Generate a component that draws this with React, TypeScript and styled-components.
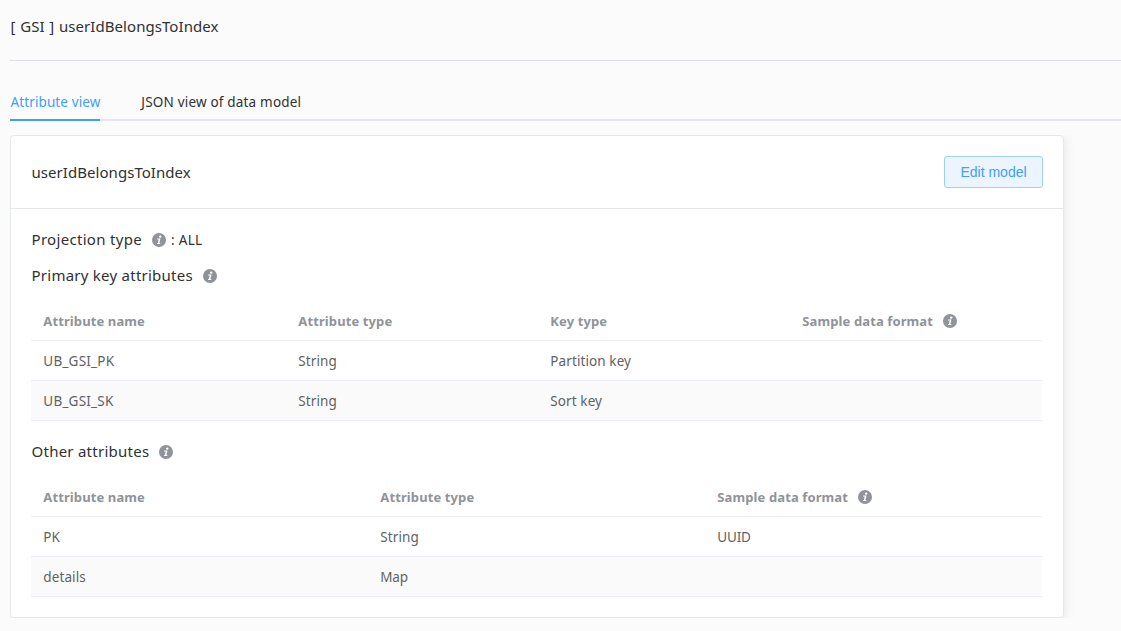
import React from "react";
import styled, { createGlobalStyle } from "styled-components";

const GlobalStyle = createGlobalStyle`
  * { box-sizing: border-box; }
  body {
    margin: 0;
    background: #fbfbfb;
    color: #303133;
    font-family: "Noto Sans", "Open Sans", sans-serif;
    overflow: hidden;
  }
`;

const Page = styled.main`
  height: 631px;
  padding-left: 10px;
  overflow: hidden;
`;

const PageTitle = styled.h1`
  height: 61px;
  margin: 0;
  padding: 15px 0 0 0.6px;
  border-bottom: 1px solid #dcdfe6;
  font-size: 15px;
  font-weight: 400;
  line-height: 23px;
  letter-spacing: 0.06px;
  word-spacing: 0.7px;
`;

const Tabs = styled.nav`
  display: flex;
  gap: 40px;
  height: 60px;
  box-shadow: inset 0 -2px #e4e7ed;
`;

const Tab = styled.a<{ $active?: boolean }>`
  height: 60px;
  width: ${(p) => (p.$active ? "90px" : "auto")};
  padding: 30px 0 0 ${(p) => (p.$active ? "0.5px" : "1.3px")};
  font-size: 13.5px;
  line-height: 22px;
  letter-spacing: ${(p) => (p.$active ? "0.11px" : "0.19px")};
  white-space: nowrap;
  color: ${(p) => (p.$active ? "#409eff" : "#303133")};
  border-bottom: 2px solid ${(p) => (p.$active ? "#409eff" : "transparent")};
`;

const TabPane = styled.section`
  margin-top: 14px;
  padding-right: 57px;
  overflow: hidden;
`;

const Card = styled.article`
  height: 483px;
  border: 1px solid #e4e7ed;
  border-radius: 4px;
  background: #fff;
  box-shadow: 0 2px 12px rgba(0, 0, 0, 0.1);
`;

const CardHeader = styled.header`
  display: flex;
  align-items: center;
  justify-content: space-between;
  height: 73px;
  padding: 0 20px;
  border-bottom: 1px solid #e4e7ed;
`;

const CardTitle = styled.h2`
  margin: 0;
  padding-left: 0.5px;
  font-size: 15px;
  font-weight: 400;
  letter-spacing: 0.05px;
`;

const EditButton = styled.button`
  width: 99px;
  height: 32px;
  padding: 0;
  border: 1px solid #a0cfff;
  border-radius: 3px;
  background: #ecf5ff;
  color: #409eff;
  font: 14px "Liberation Sans", sans-serif;
`;

const CardBody = styled.div`
  padding: 13px 20px 0;
`;

const SectionTitle = styled.h3`
  display: flex;
  align-items: center;
  height: 36px;
  margin: 0;
  padding-left: 0.5px;
  font-size: 15px;
  font-weight: 400;
  letter-spacing: 0.25px;
`;

const SectionLabel = styled.span<{ $spacing?: string }>`
  margin-bottom: 2px;
  letter-spacing: ${(p) => p.$spacing ?? "inherit"};
`;

const ProjectionValue = styled.span`
  margin-left: 5px;
  font-size: 13.5px;
  letter-spacing: 0.3px;
`;

const Icon = styled.svg`
  flex: none;
  width: 14px;
  height: 14px;
  margin-left: 10px;
`;

const Table = styled.div`
  margin: 7px 0 13px;
  box-shadow: inset 0 -1px #ebeef5;
`;

const Row = styled.div<{ $columns: string; $head?: boolean; $striped?: boolean }>`
  display: grid;
  grid-template-columns: ${(p) => p.$columns};
  height: 40px;
  margin-right: 1px;
  border-bottom: 1px solid #ebeef5;
  background: ${(p) => (p.$striped ? "#fafafa" : "#fff")};
  color: ${(p) => (p.$head ? "#909399" : "#606266")};
  font-size: ${(p) => (p.$head ? "13px" : "13.5px")};
  font-weight: ${(p) => (p.$head ? 700 : 400)};
  letter-spacing: ${(p) => (p.$head ? "0.11px" : "0.1px")};
`;

const Cell = styled.div<{ $spacing?: string }>`
  display: flex;
  align-items: center;
  padding-left: 12.3px;
  white-space: nowrap;
  letter-spacing: ${(p) => p.$spacing ?? "inherit"};
`;

function InfoIcon() {
  return (
    <Icon viewBox="0 0 14 14" aria-hidden="true">
      <circle cx="7" cy="7" r="7" fill="#909399" />
      <circle cx="8.2" cy="3.6" r="1.2" fill="#fff" />
      <path d="M5.2 5.5h3.3L7.4 10h1l-.3 1H4.9l.3-1h.7l.8-3.5h-1.7z" fill="#fff" />
    </Icon>
  );
}

type TableProps = { columns: string; head: string[]; rows: string[][] };

function cellSpacing(value: string) {
  if (value.includes("_")) return "0.22px";
  return value === "UUID" || value === "Map" ? "-0.2px" : undefined;
}

function AttributeTable({ columns, head, rows }: TableProps) {
  return (
    <Table>
      <Row $columns={columns} $head>
        {head.map((label) => (
          <Cell key={label}>
            <span>{label}</span>
            {label === "Sample data format" && <InfoIcon />}
          </Cell>
        ))}
      </Row>
      {rows.map((row, index) => (
        <Row key={row[0]} $columns={columns} $striped={index % 2 === 1}>
          {row.map((value, i) => (
            <Cell key={i} $spacing={cellSpacing(value)}>
              {value}
            </Cell>
          ))}
        </Row>
      ))}
    </Table>
  );
}

export default function App() {
  return (
    <Page>
      <GlobalStyle />
      <PageTitle>[ GSI ] userIdBelongsToIndex</PageTitle>
      <Tabs>
        <Tab $active>Attribute view</Tab>
        <Tab>JSON view of data model</Tab>
      </Tabs>
      <TabPane>
        <Card>
          <CardHeader>
            <CardTitle>userIdBelongsToIndex</CardTitle>
            <EditButton>Edit model</EditButton>
          </CardHeader>
          <CardBody>
            <SectionTitle>
              <SectionLabel $spacing="0.31px">Projection type</SectionLabel>
              <InfoIcon />
              <ProjectionValue>: ALL</ProjectionValue>
            </SectionTitle>
            <SectionTitle>
              <SectionLabel>Primary key attributes</SectionLabel>
              <InfoIcon />
            </SectionTitle>
            <AttributeTable
              columns="255px 252px 252px 1fr"
              head={["Attribute name", "Attribute type", "Key type", "Sample data format"]}
              rows={[
                ["UB_GSI_PK", "String", "Partition key", ""],
                ["UB_GSI_SK", "String", "Sort key", ""],
              ]}
            />
            <SectionTitle>
              <SectionLabel>Other attributes</SectionLabel>
              <InfoIcon />
            </SectionTitle>
            <AttributeTable
              columns="337px 337px 1fr"
              head={["Attribute name", "Attribute type", "Sample data format"]}
              rows={[
                ["PK", "String", "UUID"],
                ["details", "Map", ""],
              ]}
            />
          </CardBody>
        </Card>
      </TabPane>
    </Page>
  );
}
